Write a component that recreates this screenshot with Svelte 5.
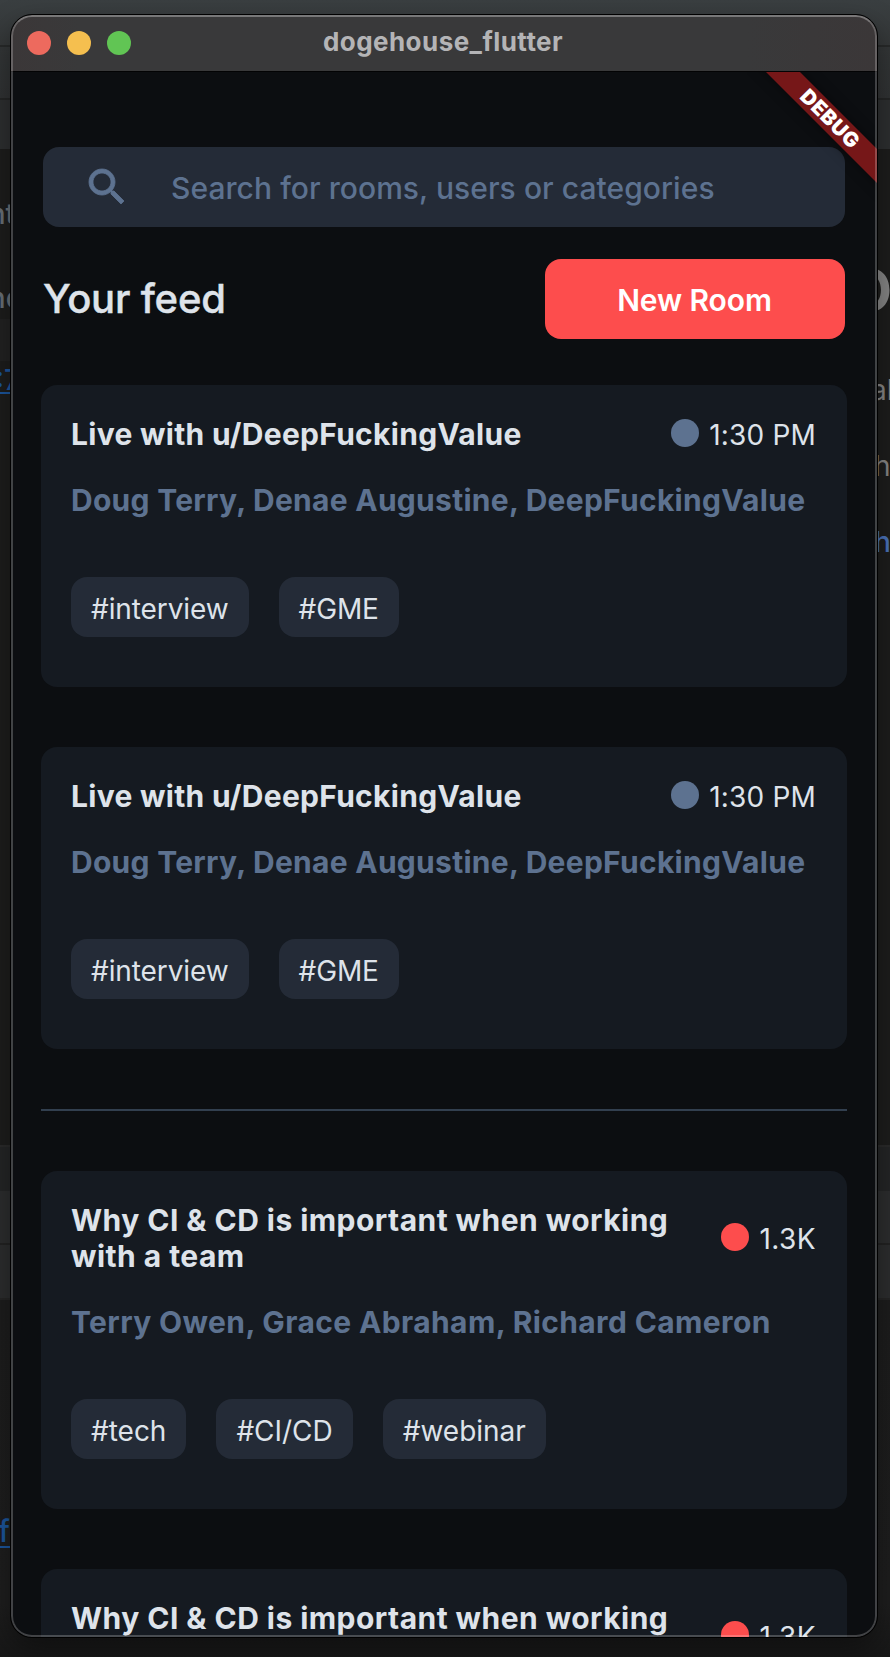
<script>
  const live = {
    title: 'Live with u/DeepFuckingValue',
    people: 'Doug Terry, Denae Augustine, DeepFuckingValue',
    status: '1:30 PM',
    scheduled: true,
    tags: ['#interview', '#GME']
  };
  const talk = {
    title: 'Why CI & CD is important when working with a team',
    people: 'Terry Owen, Grace Abraham, Richard Cameron',
    status: '1.3K',
    scheduled: false,
    tags: ['#tech', '#CI/CD', '#webinar']
  };
</script>

{#snippet card(room)}
  <article class="card" class:ongoing={!room.scheduled}>
    <header class="head">
      <h2>{room.title}</h2>
      <div class="status">
        <i class:scheduled={room.scheduled}></i>
        <span>{room.status}</span>
      </div>
    </header>
    <p class="people">{room.people}</p>
    <div class="tags">
      {#each room.tags as tag}<span>{tag}</span>{/each}
    </div>
  </article>
{/snippet}

<div class="desktop">
  <div class="backdrop">
    <div class="b1"></div>
    <div class="b2"></div>
    <div class="b3"></div>
    <div class="b4"></div>
    <div class="b5"></div>
    <div class="b6"></div>
    <div class="b7"></div>
    <div class="b8"></div>
    <div class="b9"></div>
    <div class="b10"></div>
  </div>
  <div class="strip left">
    <span class="t1">nt</span>
    <span class="t2">nd</span>
    <span class="t3">:7</span>
    <span class="t4">f</span>
  </div>
  <div class="strip right">
    <span class="r1">o</span>
    <span class="r2">al</span>
    <span class="r3">h</span>
    <span class="r4">h</span>
  </div>

  <main class="window">
    <div class="titlebar">
      <div class="lights"><i class="red"></i><i class="yellow"></i><i class="green"></i></div>
      <span class="name">dogehouse_flutter</span>
    </div>
    <section class="content">
      <div class="search">
        <svg viewBox="0 0 24 24" width="48" height="48"><path fill="currentColor" stroke="currentColor" stroke-width="0.4" d="M15.5 14h-.79l-.28-.27C15.41 12.59 16 11.11 16 9.5 16 5.91 13.09 3 9.5 3S3 5.91 3 9.5 5.91 16 9.5 16c1.61 0 3.09-.59 4.23-1.57l.27.28v.79l5 4.99L20.49 19l-4.99-5zm-6 0C7.01 14 5 11.99 5 9.5S7.01 5 9.5 5 14 7.01 14 9.5 11.99 14 9.5 14z"/></svg>
        <span>Search for rooms, users or categories</span>
      </div>
      <div class="feed">
        <h1>Your feed</h1>
        <button>New Room</button>
      </div>
      <div class="cards">
        {@render card(live)}
        {@render card(live)}
        <hr />
        {@render card(talk)}
        {@render card(talk)}
      </div>
      <div class="banner"><span>DEBUG</span></div>
    </section>
    <div class="rim"></div>
  </main>
</div>

<style>
  :global(body) { background: #1e1e1e; }
  .desktop {
    position: relative;
    width: 890px;
    height: 1657px;
    overflow: hidden;
    font-family: Inter, 'Liberation Sans', sans-serif;
  }
  .backdrop { display: flex; flex-direction: column; height: 100%; }
  .b1 { height: 45px; background: linear-gradient(#3a3f41, #343738); }
  .b2 { height: 53px; background: linear-gradient(#333637, #303233); border-top: 2px solid #272929; box-sizing: border-box; }
  .b3 { height: 51px; background: #2d2f30; border-top: 2px solid #242525; box-sizing: border-box; }
  .b4 { height: 170px; background: #1d1d1c; }
  .b5 { height: 42px; background: linear-gradient(90deg, #222 50%, #1d1d1c 50%); }
  .b6 { height: 784px; background: #1d1d1c; }
  .b7 { height: 46px; background: #242526; border-top: 2px solid #2a2a2a; box-sizing: border-box; }
  .b8 { height: 52px; background: #2c2d2e; }
  .b9 { height: 57px; background: #2c2d2e; border-top: 2px solid #222; border-bottom: 2px solid #252525; box-sizing: border-box; }
  .b10 { flex: 1; background: linear-gradient(#1d1d1d, #1e1e1e 85%, #171717); }

  .strip { position: absolute; top: 0; bottom: 0; overflow: hidden; }
  .strip span { position: absolute; line-height: 1; }
  .left { left: 0; width: 10px; }
  .right { left: 878px; width: 12px; }
  .left span { right: 0; font-size: 28px; font-weight: 500; color: #687077; }
  .left .t1 { top: 200px; right: -5px; }
  .left .t2 { top: 284px; right: -13px; }
  .left .t3 { top: 366px; right: -10px; color: #1c569c; border-bottom: 2px solid #1c569c; height: 26px; }
  .left .t4 { top: 1516px; font-size: 30px; color: #1c569c; border-bottom: 2px solid #1c569c; }
  .right span { color: #858585; font-size: 28px; }
  .right .r1 { top: 244px; left: -32px; font-size: 78px; font-weight: 500; }
  .right .r2 { top: 376px; left: -7px; }
  .right .r3 { top: 452px; left: -4px; }
  .right .r4 { top: 528px; left: -4px; color: #4a72b8; font-weight: 500; }

  .window {
    position: absolute;
    left: 11px;
    top: 15px;
    width: 866px;
    height: 1622px;
    border-radius: 21px;
    overflow: hidden;
    display: flex;
    flex-direction: column;
    background: #0c0e11;
    outline: 1px solid #000;
    box-shadow: 0 12px 30px rgba(0, 0, 0, 0.4);
  }
  .rim {
    position: absolute;
    inset: 0;
    border-radius: 21px;
    border: 2px solid rgba(255, 255, 255, 0.22);
    border-top-color: rgba(255, 255, 255, 0.32);
    pointer-events: none;
  }
  .titlebar {
    height: 57px;
    box-sizing: border-box;
    flex: none;
    background: linear-gradient(90deg, #3b3738, #39393a 8%, #39393a 85%, #3b3738);
    border-bottom: 1px solid #030304;
    display: grid;
    grid-template-columns: 1fr auto 1fr;
    align-items: center;
    padding: 0 16px;
  }
  .lights { display: flex; gap: 16px; }
  .lights i { width: 24px; height: 24px; border-radius: 50%; }
  .red { background: #ed6a5e; }
  .yellow { background: #f5bf4f; }
  .green { background: #61c554; }
  .name { color: #b4b4b6; font-size: 26px; font-weight: 700; line-height: 32px; letter-spacing: 0.45px; margin: -2px 1px 0 -1px; }

  .content { position: relative; flex: 1; overflow: hidden; padding: 75px 30px 0; }
  .search {
    height: 80px;
    margin: 0 2px;
    border-radius: 16px;
    background: #242b37;
    color: #5d7290;
    display: flex;
    align-items: center;
    padding-left: 40px;
    box-sizing: border-box;
  }
  .search svg { flex: none; margin-top: -1px; }
  .search span { margin: 2px 0 0 40px; font-size: 30px; font-weight: 500; letter-spacing: 0.06px; white-space: nowrap; }
  .feed {
    margin: 32px 2px 46px;
    height: 80px;
    display: flex;
    justify-content: space-between;
    align-items: center;
  }
  h1 { margin: 0; color: #dee3ea; font-size: 40px; font-weight: 500; line-height: 48px; letter-spacing: -0.2px; -webkit-text-stroke: 0.4px #dee3ea; }
  button {
    width: 300px;
    height: 80px;
    border: 0;
    border-radius: 16px;
    background: #fd4d4d;
    color: #fff;
    font: 600 30px Inter, sans-serif;
    letter-spacing: -0.1px;
    padding: 2px 1px 0 0;
  }
  .cards { display: flex; flex-direction: column; gap: 60px; }
  hr { width: 100%; height: 2px; margin: 0; border: 0; background: #323f4f; }
  .card {
    background: #151a21;
    border-radius: 16px;
    padding: 31px 30px 50px;
  }
  .head { display: flex; align-items: center; justify-content: space-between; }
  h2 { margin: 0; width: 620px; color: #dee3ea; font-size: 30px; font-weight: 700; line-height: 36px; letter-spacing: 0.29px; }
  .status { display: flex; align-items: center; gap: 10px; height: 34px; padding: 0 1px 0 0; color: #dee3ea; font-size: 28px; line-height: 34px; letter-spacing: 0.2px; white-space: nowrap; }
  .status span { margin-top: 1px; }
  .status i { width: 28px; height: 28px; border-radius: 50%; background: #fd4d4d; margin-top: -2px; }
  .status i.scheduled { background: #5d7290; }
  .people { margin: 30px 0 59px; color: #5d7290; font-size: 30px; font-weight: 700; line-height: 36px; letter-spacing: 0.28px; white-space: nowrap; }
  .ongoing h2 { letter-spacing: 0.45px; }
  .ongoing .people { letter-spacing: 0.38px; }
  .ongoing .status { gap: 11px; letter-spacing: 0.4px; }
  .tags { display: flex; gap: 30px; }
  .tags span {
    height: 60px;
    padding: 2px 20px 0;
    box-sizing: border-box;
    border-radius: 16px;
    background: #242b37;
    color: #dee3ea;
    font-size: 28px;
    letter-spacing: -0.1px;
    line-height: 60px;
  }
  .ongoing .tags span { letter-spacing: -0.02px; }
  .banner {
    position: absolute;
    top: 0;
    right: 0;
    width: 130px;
    height: 130px;
    overflow: hidden;
  }
  .banner span {
    position: absolute;
    left: -47.5px;
    top: 35px;
    width: 260px;
    height: 24px;
    line-height: 24px;
    text-align: center;
    transform: rotate(45deg);
    background: #761718;
    color: #fff;
    font-size: 20.5px;
    font-weight: 900;
    letter-spacing: 0.6px;
    box-shadow: 0 0 12px rgba(0, 0, 0, 0.5);
  }
</style>
